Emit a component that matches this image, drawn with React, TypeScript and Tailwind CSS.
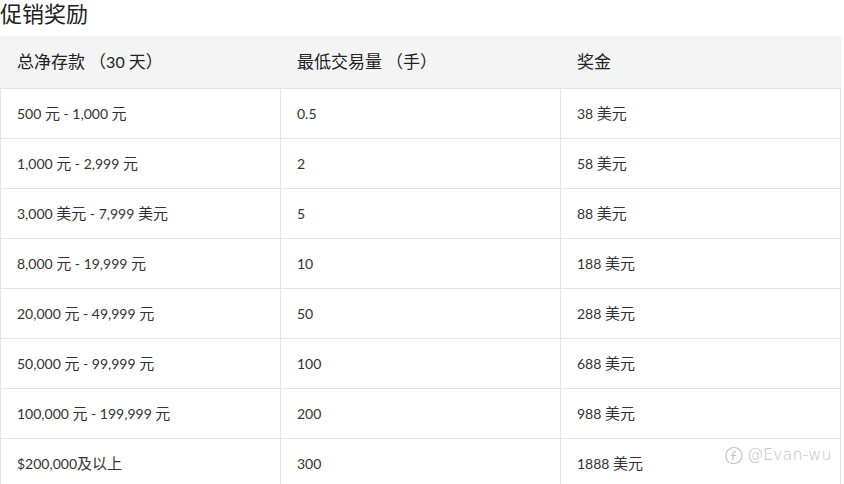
const rows = [
  ['500 元 - 1,000 元', '0.5', '38 美元'],
  ['1,000 元 - 2,999 元', '2', '58 美元'],
  ['3,000 美元 - 7,999 美元', '5', '88 美元'],
  ['8,000 元 - 19,999 元', '10', '188 美元'],
  ['20,000 元 - 49,999 元', '50', '288 美元'],
  ['50,000 元 - 99,999 元', '100', '688 美元'],
  ['100,000 元 - 199,999 元', '200', '988 美元'],
  ['$200,000及以上', '300', '1888 美元'],
];

const font = "font-['Lato','Noto_Sans_CJK_SC',sans-serif]";

// CJK glyphs in the shot run a little larger than the latin digits
const Mixed = ({ text, cjk }: { text: string; cjk: string }) => (
  <>
    {text.split(/([\u3000-\u9fff\uff00-\uffef]+)/).map((part, i) =>
      i % 2 === 1 ? (
        <span key={i} className={cjk}>
          {part}
        </span>
      ) : (
        part
      )
    )}
  </>
);

export default function App() {
  return (
    <div className={`relative w-[844px] h-[484px] overflow-hidden bg-white ${font}`}>
      <h2 className="text-[22px] leading-[28px] mb-2 text-[#222] font-normal">促销奖励</h2>

      <div className="w-[841px]">
        {/* header */}
        <div className="grid grid-cols-[281px_280px_280px] h-[53px] items-center bg-[#f4f4f4] border-b border-[#e3e3e3] text-[16px] text-[#222]">
          <div className="pl-[17px]">
            <Mixed text="总净存款 （30 天）" cjk="text-[17px]" />
          </div>
          <div className="pl-[16px]">
            <Mixed text="最低交易量 （手）" cjk="text-[17px]" />
          </div>
          <div className="pl-[16px]">
            <Mixed text="奖金" cjk="text-[17px]" />
          </div>
        </div>

        {rows.map((r, i) => (
          <div
            key={i}
            className="grid grid-cols-[280px_280px_280px] h-[50px] border-l border-b border-[#e3e3e3] text-[14px] text-[#333]"
          >
            {r.map((c, j) => (
              <div key={j} className="flex items-center pl-4 border-r border-[#e3e3e3] whitespace-pre">
                <span>
                  <Mixed text={c} cjk="text-[15px]" />
                </span>
              </div>
            ))}
          </div>
        ))}
      </div>

      {/* watermark */}
      <div className="absolute left-[725px] top-[445px] flex items-center gap-[4px] text-[#c4c4c4] [text-shadow:0_0_1px_#fff,0_0_1px_#fff]">
        <svg width="18" height="19" viewBox="0 0 18 19" fill="none" stroke="#c4c4c4" strokeWidth="1.2" strokeLinecap="round">
          <path d="M4 16.5 C1.5 14.5 1 12 1 9.5 C1 4.8 4.6 1.5 9 1.5 C13.4 1.5 17 4.8 17 9.5 C17 14.2 13.4 17.5 9 17.5 C7.8 17.5 6.8 17.3 5.8 16.9" />
          <path d="M10.5 5.5 C8.8 5.3 8 6.5 8 8 L8 14" />
          <path d="M6 9.5 L10.5 9.5" />
        </svg>
        <span className="font-['DejaVu_Sans',sans-serif] text-[16px] leading-[20px] font-light">@Evan-wu</span>
      </div>
    </div>
  );
}
